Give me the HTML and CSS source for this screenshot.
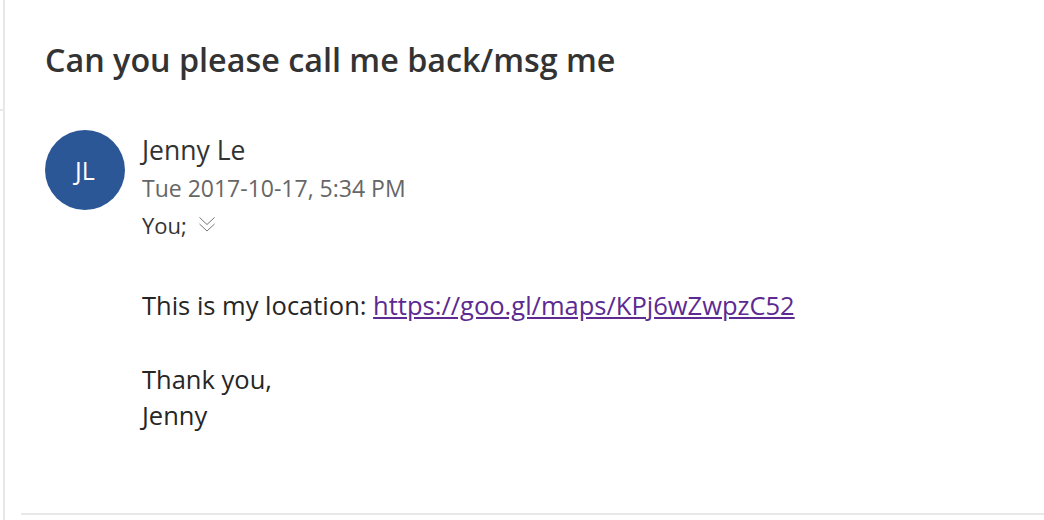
FILE: index.html
```html
<!DOCTYPE html>
<html>
<head>
<meta charset="utf-8">
<link rel="stylesheet" href="styles.css">
</head>
<body>
<div class="pane">
  <h1 class="subject">Can you please call me back/msg me</h1>
  <div class="message">
    <div class="header">
      <div class="avatar">JL</div>
      <div class="meta">
        <div class="sender">Jenny Le</div>
        <div class="date">Tue 2017-10-17, 5:34 PM</div>
        <div class="to">You; <svg class="chev" width="18" height="17" viewBox="0 0 18 17"><path d="M1.5 1.5 L9 8.5 L16.5 1.5 M1.5 8 L9 15 L16.5 8" fill="none" stroke="#777" stroke-width="1"/></svg></div>
      </div>
    </div>
    <div class="body">
      <p>This is my location: <a href="#">https://goo.gl/maps/KPj6wZwpzC52</a></p>
      <p>Thank you,<br>Jenny</p>
    </div>
  </div>
  <div class="rule"></div>
</div>
</body>
</html>
```
FILE: styles.css
```css
html, body {
  margin: 0;
  padding: 0;
  background: #fff;
}
body {
  font-family: "Open Sans", "Noto Sans", sans-serif;
  color: #262626;
  height: 520px;
  overflow: hidden;
}
.pane {
  position: relative;
  margin-left: 3px;
  border-left: 2px solid #e8e8e8;
  height: 520px;
  box-sizing: border-box;
  padding-top: 37px;
}
.pane::before {
  content: "";
  position: absolute;
  left: -5px;
  top: 109px;
  width: 3px;
  height: 2px;
  background: #e8e8e8;
}
.subject {
  margin: 0 0 0 40px;
  font-size: 32.3px;
  font-weight: 600;
  color: #333;
  line-height: 44px;
}
.message {
  padding-left: 40px;
  margin-top: 49px;
}
.header {
  display: flex;
  gap: 17px;
}
.avatar {
  width: 80px;
  height: 80px;
  border-radius: 50%;
  background: #2b5797;
  color: #fff;
  font-size: 25px;
  display: flex;
  align-items: center;
  justify-content: center;
}
.meta {
  display: flex;
  flex-direction: column;
  margin-top: 1px;
}
.sender {
  font-size: 26.5px;
  line-height: 38px;
  color: #333;
}
.date {
  font-size: 23px;
  line-height: 38px;
  color: #666;
}
.to {
  font-size: 22px;
  line-height: 36px;
  color: #333;
  display: flex;
  align-items: center;
  gap: 11px;
}
.chev {
  margin-top: -2px;
}
.body {
  padding-left: 97px;
  margin-top: 44px;
  font-size: 25.5px;
  line-height: 36px;
  color: #262626;
}
.body p {
  margin: 0 0 38px 0;
}
.body a {
  color: #5c2a90;
}
.rule {
  position: absolute;
  left: 16px;
  right: 0;
  top: 513px;
  height: 2px;
  background: #e8e8e8;
}
```
